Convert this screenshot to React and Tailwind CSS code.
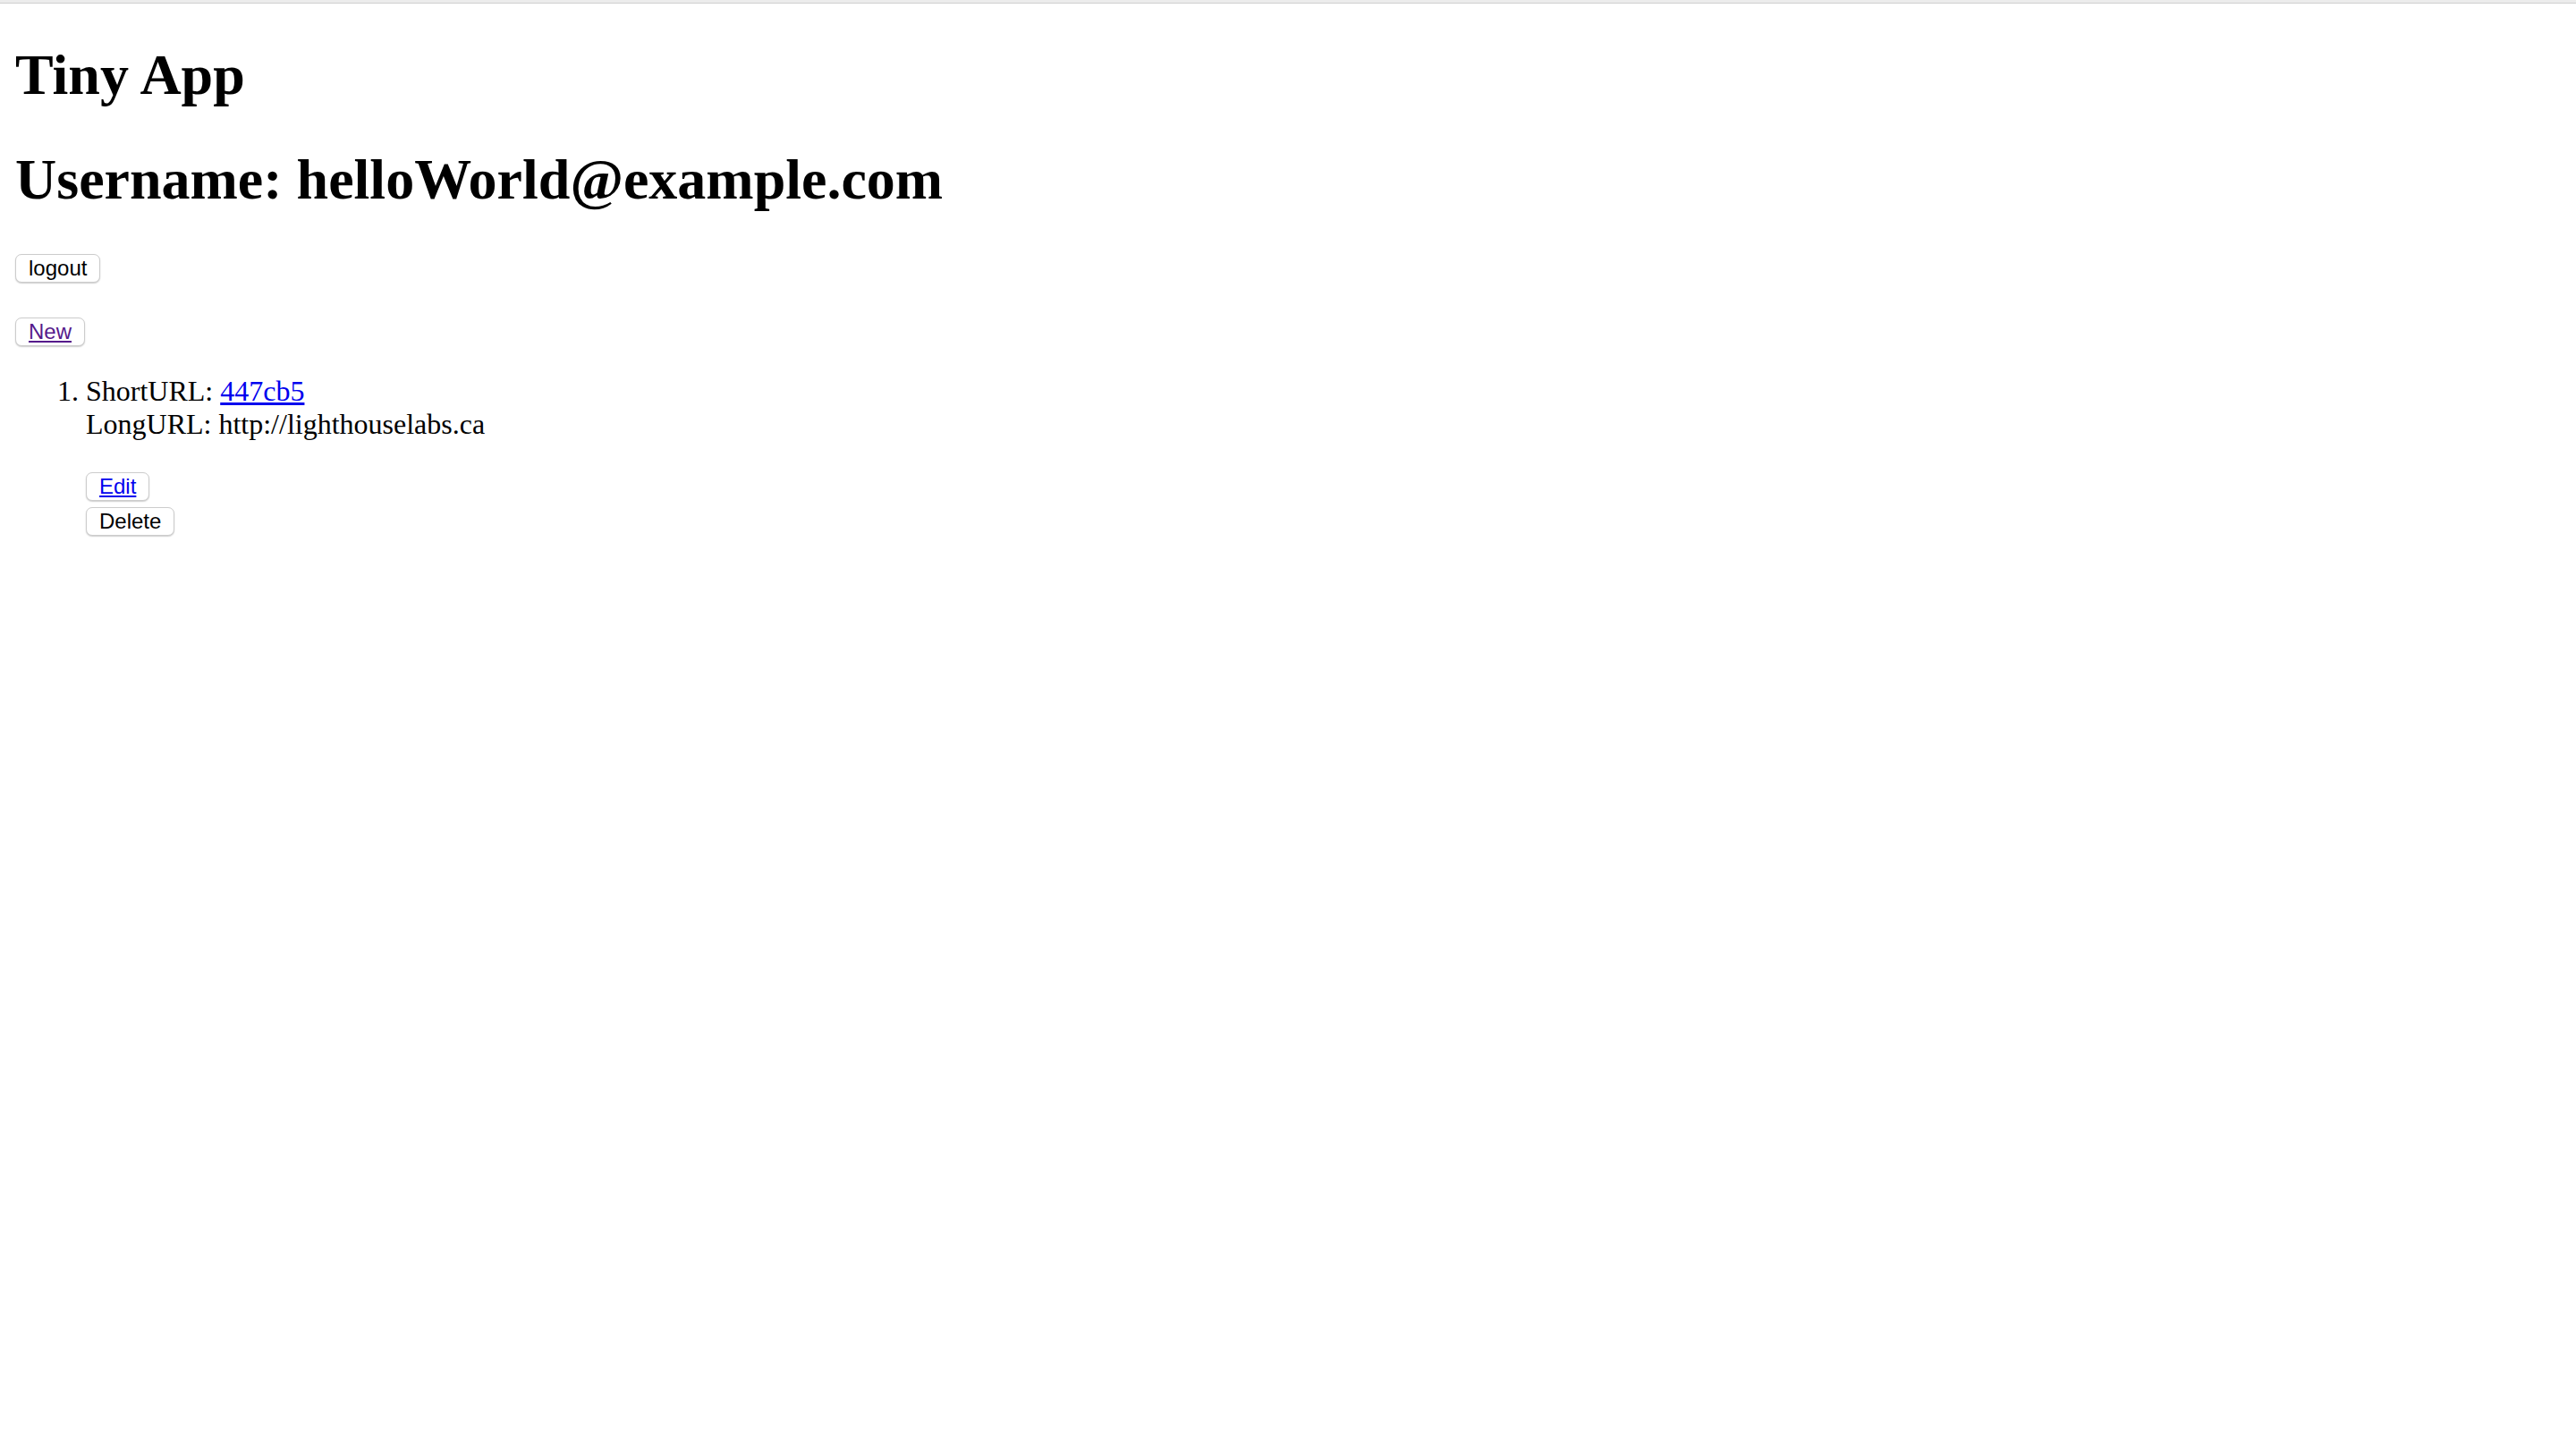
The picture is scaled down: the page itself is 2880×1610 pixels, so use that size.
export default function App() {
  const btn =
    "h-[32px] px-[14px] bg-white border border-[#cccccc] rounded-[7px] shadow-[0_1px_1.5px_rgba(0,0,0,0.2)] text-[24px] leading-none text-black flex items-center";
  const sans = { fontFamily: '"Liberation Sans", Arial, sans-serif' };
  return (
    <div className="min-h-screen bg-white text-black" style={{ fontFamily: '"Liberation Serif", "Times New Roman", serif' }}>
      <div className="h-[3px] bg-[#ececec] border-b border-[#cfcfcf] box-content" />
      <div className="px-[17px]">
        <h1 className="mt-[44px] text-[64px] leading-[72px] font-bold">Tiny App</h1>
        <h1 className="mt-[45px] text-[64px] leading-[72px] font-bold">Username: helloWorld@example.com</h1>
        <div className="mt-[47px] flex">
          <button className={btn} style={sans}>logout</button>
        </div>
        <div className="mt-[39px] flex">
          <button className={btn} style={sans}>
            <a href="#" className="underline text-[#551a8b]">New</a>
          </button>
        </div>
        <ol className="mt-[32px] pl-[79px] list-decimal text-[32px] leading-[37px]">
          <li>
            ShortURL: <a href="#" className="underline text-[#0000ee]">447cb5</a>
            <br />
            LongURL: http://lighthouselabs.ca
            <div className="mt-[35px] flex flex-col items-start gap-[7px]">
              <button className={btn} style={sans}>
                <a href="#" className="underline text-[#0000ee]">Edit</a>
              </button>
              <button className={btn} style={sans}>Delete</button>
            </div>
          </li>
        </ol>
      </div>
    </div>
  );
}
